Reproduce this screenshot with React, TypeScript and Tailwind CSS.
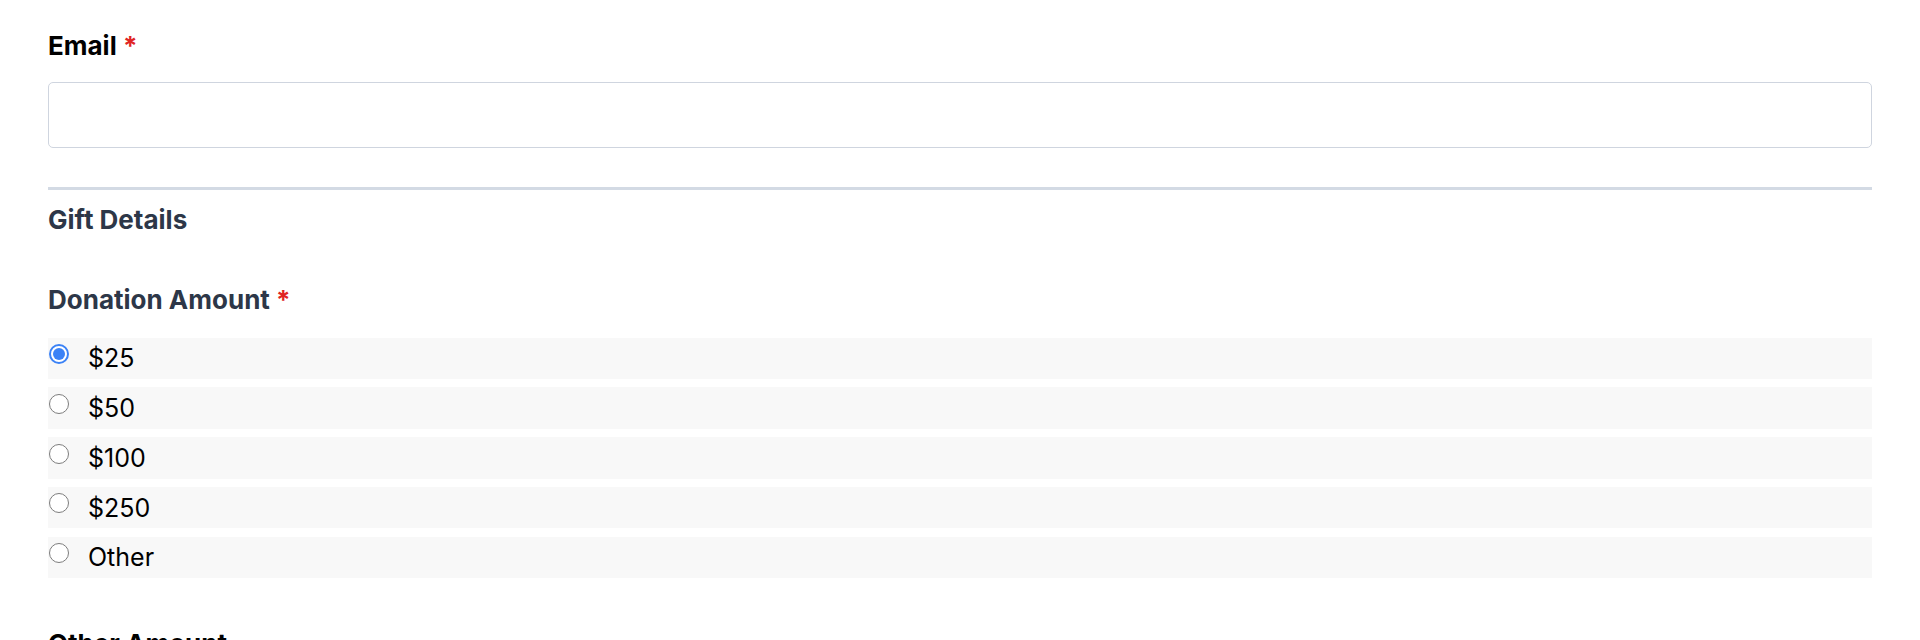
import React, { useState } from 'react';

const amounts = ['$25', '$50', '$100', '$250', 'Other'];

const Radio: React.FC<{ checked: boolean }> = ({ checked }) =>
  checked ? (
    <span className="mt-[6.5px] ml-[1px] w-5 h-5 shrink-0 rounded-full border-2 border-[#3b82f6] bg-white flex items-center justify-center">
      <span className="w-[12px] h-[12px] rounded-full bg-[#3b82f6]" />
    </span>
  ) : (
    <span className="mt-[6.5px] ml-[1px] w-5 h-5 shrink-0 rounded-full border-[1.5px] border-[#7d7d7d] bg-white" />
  );

const Required = () => <span className="text-[#e02424]"> *</span>;

export default function App() {
  const [amount, setAmount] = useState('$25');

  return (
    <div className="w-full h-[640px] overflow-hidden bg-white px-12 pt-[30px] font-['Inter',sans-serif]">
      {/* Email */}
      <label className="block text-[26px] leading-[32px] font-bold text-black">
        Email
        <Required />
      </label>
      <input
        type="email"
        className="mt-[20px] block w-full h-[66px] rounded-[5px] border border-[#cfd5df] bg-white px-4 text-[24px] outline-none"
      />

      {/* Section divider */}
      <div className="mt-[39px] h-[3px] bg-[#d3dae4]" />

      <h2 className="mt-[14px] text-[26px] leading-[32px] font-bold text-[#2d3748]">Gift Details</h2>

      <div className="mt-[48px] text-[26px] leading-[32px] font-bold text-[#2d3748]">
        Donation Amount
        <Required />
      </div>

      <div className="mt-[21.5px] flex flex-col gap-[8.25px]">
        {amounts.map((a) => (
          <label
            key={a}
            onClick={() => setAmount(a)}
            className="flex items-start gap-[19px] h-[41.5px] bg-[#f8f8f8] cursor-pointer"
          >
            <Radio checked={amount === a} />
            <span className="self-center text-[25px] leading-[32px] text-black">{a}</span>
          </label>
        ))}
      </div>

      <div className="mt-[50px] text-[26px] leading-[32px] font-bold text-black">Other Amount</div>
    </div>
  );
}
